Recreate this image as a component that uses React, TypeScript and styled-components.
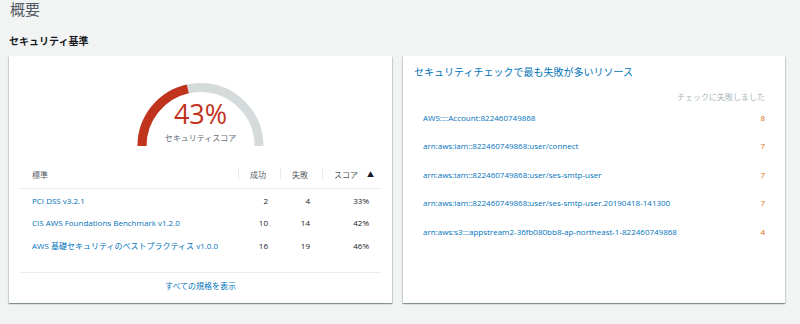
import React from "react";
import styled, { createGlobalStyle } from "styled-components";

const GlobalStyle = createGlobalStyle`
  html, body { margin: 0; padding: 0; background: #f2f3f3; }
  body {
    font-family: "Open Sans", "Noto Sans CJK JP", sans-serif;
    color: #16191f;
  }
`;

const Page = styled.div`
  padding: 0 15px 0 9px;
  width: 800px;
  height: 324px;
  box-sizing: border-box;
`;

const PageTitle = styled.h1`
  margin: 0;
  padding: 0 0 0 1px;
  font-size: 15px;
  line-height: 18px;
  font-weight: 400;
  color: #545b64;
`;

const SectionTitle = styled.h2`
  margin: 16px 0 0 0;
  font-size: 10px;
  line-height: 14px;
  font-weight: 700;
  color: #16191f;
`;

const Cards = styled.div`
  display: grid;
  grid-template-columns: 383px 382px;
  column-gap: 11px;
  align-items: start;
  margin-top: 8px;
`;

const Card = styled.section`
  background: #fff;
  height: 247px;
  box-sizing: border-box;
  box-shadow: 0 1px 1px 0 rgba(0, 28, 36, 0.3), 1px 1px 1px 0 rgba(0, 28, 36, 0.12),
    -1px 1px 1px 0 rgba(0, 28, 36, 0.12);
  display: flex;
  flex-direction: column;
`;

const LeftCard = styled(Card)`
  padding: 27px 11px 0 11px;
`;

const RightCard = styled(Card)`
  padding: 8px 20px 0 11px;
`;

const Gauge = styled.div`
  display: grid;
  justify-items: center;
  align-items: end;
  height: 63px;
`;

const GaugeSvg = styled.svg`
  grid-area: 1 / 1;
  display: block;
`;

const GaugeText = styled.div`
  grid-area: 1 / 1;
  display: flex;
  flex-direction: column;
  align-items: center;
  padding-bottom: 2px;
`;

const Percent = styled.div`
  font-size: 27px;
  line-height: 22px;
  color: #c0341d;
  font-weight: 400;
`;

const GaugeLabel = styled.div`
  font-size: 8px;
  line-height: 12px;
  color: #687078;
  margin-top: 7px;
`;

const Table = styled.div`
  margin-top: 14px;
  display: grid;
  grid-template-columns: 218px 42px 42px 59px;
`;

const HeadCell = styled.div<{ $sep?: boolean }>`
  height: 28px;
  display: flex;
  align-items: center;
  padding: 0 0 0 12px;
  font-size: 8px;
  color: #545b64;
  border-bottom: 1px solid #eaeded;
  position: relative;
  ${(p) =>
    p.$sep
      ? `&::before { content: ""; position: absolute; left: 0; top: 8px; bottom: 8px; width: 1px; background: #eaeded; }`
      : ""}
`;

const SortIcon = styled.span`
  margin-left: 9px;
  font-size: 7px;
  color: #16191f;
`;

const Cell = styled.div<{ $num?: boolean }>`
  height: 22.5px;
  display: flex;
  align-items: center;
  font-size: 8px;
  justify-content: ${(p) => (p.$num ? "flex-end" : "flex-start")};
  padding: ${(p) => (p.$num ? "0 12px 0 0" : "0 0 0 12px")};
  color: ${(p) => (p.$num ? "#16191f" : "#0073bb")};
  white-space: nowrap;
`;

const Footer = styled.div`
  margin-top: auto;
  margin-bottom: 6px;
  border-top: 1px solid #eaeded;
  height: 24px;
  display: flex;
  align-items: center;
  justify-content: center;
  font-size: 8px;
  color: #0073bb;
`;

const RightTitle = styled.h3`
  margin: 0;
  font-size: 10px;
  line-height: 16px;
  font-weight: 400;
  color: #0073bb;
`;

const FailHead = styled.div`
  margin-top: 11px;
  text-align: right;
  font-size: 8px;
  line-height: 12px;
  color: #aab7b8;
`;

const ResourceList = styled.ul`
  list-style: none;
  margin: 0;
  padding: 0 0 0 9px;
`;

const ResourceRow = styled.li`
  height: 28.5px;
  display: flex;
  align-items: center;
  justify-content: space-between;
  font-size: 8px;
`;

const ResourceName = styled.span`
  color: #0073bb;
`;

const FailCount = styled.span`
  color: #dd6b10;
`;

const standards = [
  { name: "PCI DSS v3.2.1", ok: 2, ng: 4, score: "33%" },
  { name: "CIS AWS Foundations Benchmark v1.2.0", ok: 10, ng: 14, score: "42%" },
  { name: "AWS 基礎セキュリティのベストプラクティス v1.0.0", ok: 16, ng: 19, score: "46%" },
];

const resources = [
  { name: "AWS::::Account:822460749868", n: 8 },
  { name: "arn:aws:iam::822460749868:user/connect", n: 7 },
  { name: "arn:aws:iam::822460749868:user/ses-smtp-user", n: 7 },
  { name: "arn:aws:iam::822460749868:user/ses-smtp-user.20190418-141300", n: 7 },
  { name: "arn:aws:s3:::appstream2-36fb080bb8-ap-northeast-1-822460749868", n: 4 },
];

function arcPath(cx: number, cy: number, r: number, fromFrac: number, toFrac: number) {
  const a1 = Math.PI * (1 - fromFrac);
  const a2 = Math.PI * (1 - toFrac);
  const x1 = cx + r * Math.cos(a1);
  const y1 = cy - r * Math.sin(a1);
  const x2 = cx + r * Math.cos(a2);
  const y2 = cy - r * Math.sin(a2);
  return `M ${x1} ${y1} A ${r} ${r} 0 0 1 ${x2} ${y2}`;
}

export default function App() {
  const score = 0.43;
  return (
    <>
      <GlobalStyle />
      <Page>
        <PageTitle>概要</PageTitle>
        <SectionTitle>セキュリティ基準</SectionTitle>
        <Cards>
          <LeftCard>
            <Gauge>
              <GaugeSvg width="127" height="63" viewBox="0 0 127 63">
                <path d={arcPath(63.5, 63, 58.5, 0, 1)} fill="none" stroke="#d5dbdb" strokeWidth="9" />
                <path d={arcPath(63.5, 63, 58.5, 0, score)} fill="none" stroke="#c0341d" strokeWidth="9" />
              </GaugeSvg>
              <GaugeText>
                <Percent>43%</Percent>
                <GaugeLabel>セキュリティスコア</GaugeLabel>
              </GaugeText>
            </Gauge>
            <Table>
              <HeadCell>標準</HeadCell>
              <HeadCell $sep>成功</HeadCell>
              <HeadCell $sep>失敗</HeadCell>
              <HeadCell $sep>
                スコア<SortIcon>▲</SortIcon>
              </HeadCell>
              {standards.map((s) => (
                <React.Fragment key={s.name}>
                  <Cell>{s.name}</Cell>
                  <Cell $num>{s.ok}</Cell>
                  <Cell $num>{s.ng}</Cell>
                  <Cell $num>{s.score}</Cell>
                </React.Fragment>
              ))}
            </Table>
            <Footer>すべての規格を表示</Footer>
          </LeftCard>
          <RightCard>
            <RightTitle>セキュリティチェックで最も失敗が多いリソース</RightTitle>
            <FailHead>チェックに失敗しました</FailHead>
            <ResourceList>
              {resources.map((r) => (
                <ResourceRow key={r.name}>
                  <ResourceName>{r.name}</ResourceName>
                  <FailCount>{r.n}</FailCount>
                </ResourceRow>
              ))}
            </ResourceList>
          </RightCard>
        </Cards>
      </Page>
    </>
  );
}
